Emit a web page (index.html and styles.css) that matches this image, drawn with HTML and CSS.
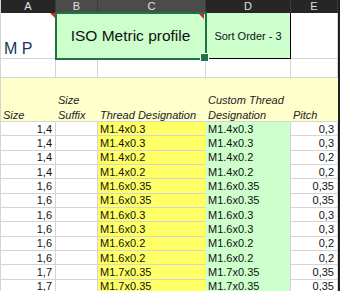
FILE: index.html
```html
<!DOCTYPE html>
<html lang="en">
<head>
  <meta charset="UTF-8" />
  <title>ISO Metric profile</title>
  <link rel="stylesheet" href="styles.css">
</head>
<body>
  <div class="sheet" id="sheet">
    <div class="col-head">A</div>
    <div class="col-head sel">B</div>
    <div class="col-head sel">C</div>
    <div class="col-head">D</div>
    <div class="col-head">E</div>

    <div class="cell mp note">M P</div>
    <div class="cell title note">ISO Metric profile</div>
    <div class="cell sort">Sort Order - 3</div>
    <div class="cell"></div>

    <div class="cell"></div>
    <div class="cell"></div>
    <div class="cell"></div>
    <div class="cell"></div>
    <div class="cell"></div>

    <div class="cell th"><span>Size</span></div>
    <div class="cell th"><span>Size<br>Suffix</span></div>
    <div class="cell th"><span>Thread Designation</span></div>
    <div class="cell th"><span>Custom Thread<br>Designation</span></div>
    <div class="cell th"><span>Pitch</span></div>
  </div>

  <script>
    const rows = [
      ["1,4", "M1.4x0.3", "0,3"],
      ["1,4", "M1.4x0.3", "0,3"],
      ["1,4", "M1.4x0.2", "0,2"],
      ["1,4", "M1.4x0.2", "0,2"],
      ["1,6", "M1.6x0.35", "0,35"],
      ["1,6", "M1.6x0.35", "0,35"],
      ["1,6", "M1.6x0.3", "0,3"],
      ["1,6", "M1.6x0.3", "0,3"],
      ["1,6", "M1.6x0.2", "0,2"],
      ["1,6", "M1.6x0.2", "0,2"],
      ["1,7", "M1.7x0.35", "0,35"],
      ["1,7", "M1.7x0.35", "0,35"]
    ];

    const sheet = document.getElementById("sheet");
    rows.forEach(function (r) {
      sheet.insertAdjacentHTML("beforeend", `
        <div class="cell num">${r[0]}</div>
        <div class="cell"></div>
        <div class="cell yellow">${r[1]}</div>
        <div class="cell green">${r[1]}</div>
        <div class="cell num">${r[2]}</div>
      `);
    });
  </script>
</body>
</html>
```

FILE: styles.css
```css
* {
  box-sizing: border-box;
}

body {
  margin: 0;
  background: #1f1f1f;
  font-family: "Liberation Sans", Arial, sans-serif;
}

.sheet {
  width: 337px;
  background: #fff;
  display: grid;
  grid-template-columns: 55px 42px 108px 85px 47px;
  grid-template-rows: 13px 46px 19px 44px;
  grid-auto-rows: 14.33px;
  border-left: 1px solid #d4d4d4;
}

.col-head {
  background: #262626;
  color: #e0e0e0;
  font-size: 11px;
  line-height: 13px;
  text-align: center;
  border-right: 1px solid #3c3c3c;
}

.col-head.sel {
  background: #4b4b4b;
}

.cell {
  position: relative;
  display: flex;
  align-items: center;
  padding: 0 2px;
  font-size: 11px;
  color: #111;
  border-right: 1px solid #d4d4d4;
  border-bottom: 1px solid #d4d4d4;
  white-space: nowrap;
}

.note::before {
  content: "";
  position: absolute;
  top: 0;
  right: 0;
  border-top: 5px solid #e02020;
  border-left: 5px solid transparent;
}

.mp {
  align-items: flex-end;
  padding: 0 0 0 3px;
  font-size: 16px;
  color: #17365d;
}

.title {
  grid-column: span 2;
  justify-content: center;
  background: #ccffcc;
  font-size: 15.5px;
  outline: 2px solid #217346;
  outline-offset: -1px;
  z-index: 1;
}

.title::before {
  top: 1px;
  right: 1px;
}

.title::after {
  content: "";
  position: absolute;
  right: -4px;
  bottom: -4px;
  width: 7px;
  height: 7px;
  background: #217346;
  border: 1px solid #fff;
}

.sort {
  justify-content: center;
  background: #ccffcc;
  border-right-color: #000;
  border-bottom-color: #000;
}

.th {
  align-items: flex-end;
  padding-bottom: 0;
  background: #ffffcc;
  border-right-color: #ffffcc;
  font-style: italic;
  line-height: 15px;
  color: #222;
  white-space: normal;
}

.th span {
  margin-bottom: -2px;
}

.num {
  justify-content: flex-end;
  padding-right: 3px;
}

.yellow {
  background: #ffff66;
  border-right-color: #ffff66;
}

.green {
  background: #ccffcc;
  border-bottom-color: #ccffcc;
}
```
